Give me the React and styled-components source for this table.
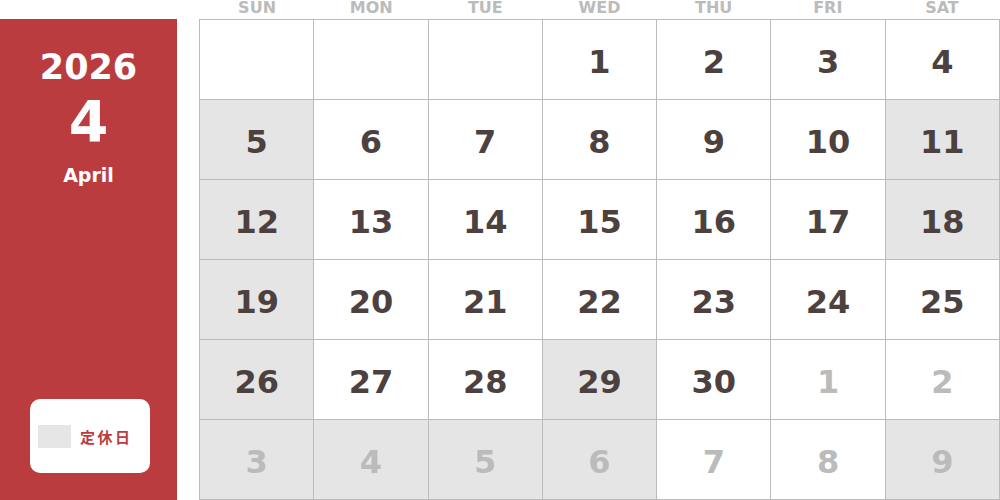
import styled, { createGlobalStyle } from 'styled-components';

const GlobalStyle = createGlobalStyle`
    html, body {
        margin: 0;
        padding: 0;
        background: #ffffff;
    }
    body {
        font-family: 'DejaVu Sans', Verdana, sans-serif;
    }
`;

const weekDays = ['SUN', 'MON', 'TUE', 'WED', 'THU', 'FRI', 'SAT'];

// day: number shown, other: belongs to next month, off: closed day
const days = [
    { day: '' }, { day: '' }, { day: '' },
    { day: 1 }, { day: 2 }, { day: 3 }, { day: 4 },
    { day: 5, off: true }, { day: 6 }, { day: 7 }, { day: 8 }, { day: 9 }, { day: 10 }, { day: 11, off: true },
    { day: 12, off: true }, { day: 13 }, { day: 14 }, { day: 15 }, { day: 16 }, { day: 17 }, { day: 18, off: true },
    { day: 19, off: true }, { day: 20 }, { day: 21 }, { day: 22 }, { day: 23 }, { day: 24 }, { day: 25 },
    { day: 26, off: true }, { day: 27 }, { day: 28 }, { day: 29, off: true }, { day: 30 }, { day: 1, other: true }, { day: 2, other: true },
    { day: 3, other: true, off: true }, { day: 4, other: true, off: true }, { day: 5, other: true, off: true },
    { day: 6, other: true, off: true }, { day: 7, other: true }, { day: 8, other: true }, { day: 9, other: true, off: true },
];

function App() {
    return (
        <Page>
            <GlobalStyle />
            <SidePanel>
                <MonthInfo>
                    <Year>2026</Year>
                    <MonthNumber>4</MonthNumber>
                    <MonthName>April</MonthName>
                </MonthInfo>
                <Legend>
                    <LegendSwatch />
                    <LegendText>定休日</LegendText>
                </Legend>
            </SidePanel>

            <CalendarColumn>
                <WeekHeader>
                    {weekDays.map((w) => (
                        <WeekLabel key={w}>{w}</WeekLabel>
                    ))}
                </WeekHeader>
                <Grid>
                    {days.map((d, i) => (
                        <Cell key={i} $off={d.off} $other={d.other}>
                            {d.day}
                        </Cell>
                    ))}
                </Grid>
            </CalendarColumn>
        </Page>
    );
}

export default App;

const Page = styled.div`
    width: 1000px;
    height: 500px;
    display: flex;
    align-items: flex-start;
    gap: 22px;
    overflow: hidden;
`;

const SidePanel = styled.div`
    width: 177px;
    height: 481px;
    margin-top: 19px;
    background: #bb3c3f;
    display: flex;
    flex-direction: column;
    justify-content: space-between;
`;

const MonthInfo = styled.div`
    display: flex;
    flex-direction: column;
    align-items: center;
    color: #ffffff;
    font-weight: bold;
    padding-top: 25px;
`;

const Year = styled.div`
    font-size: 35px;
    line-height: 46px;
`;

const MonthNumber = styled.div`
    font-size: 57px;
    line-height: 64px;
`;

const MonthName = styled.div`
    font-size: 19px;
    line-height: 28px;
    margin-top: 7px;
`;

const Legend = styled.div`
    width: 120px;
    height: 74px;
    margin: 0 0 27px 30px;
    background: #ffffff;
    border-radius: 10px;
    display: flex;
    align-items: center;
    padding-left: 8px;
    box-sizing: border-box;
    gap: 9px;
`;

const LegendSwatch = styled.div`
    width: 33px;
    height: 23px;
    background: #e6e6e6;
`;

const LegendText = styled.span`
    font-family: 'Noto Sans CJK JP', sans-serif;
    font-weight: bold;
    font-size: 15px;
    letter-spacing: 2.5px;
    color: #bb3c3f;
`;

const CalendarColumn = styled.div`
    width: 801px;
    display: flex;
    flex-direction: column;
`;

const WeekHeader = styled.div`
    height: 19px;
    display: grid;
    grid-template-columns: repeat(7, 1fr);
    padding: 0 1px;
`;

const WeekLabel = styled.div`
    text-align: center;
    font-weight: bold;
    font-size: 16px;
    line-height: 16px;
    color: #bbbbbb;
`;

const Grid = styled.div`
    display: grid;
    grid-template-columns: repeat(7, 1fr);
    grid-auto-rows: 79px;
    gap: 1px;
    padding: 1px;
    background: #bbbbbb;
    height: 481px;
    box-sizing: border-box;
`;

const Cell = styled.div`
    background: ${(p) => (p.$off ? '#e5e5e5' : '#ffffff')};
    color: ${(p) => (p.$other ? '#bbbbbb' : '#4d4140')};
    display: flex;
    align-items: center;
    justify-content: center;
    font-weight: bold;
    font-size: 32px;
    padding-top: 4px;
    box-sizing: border-box;
`;
